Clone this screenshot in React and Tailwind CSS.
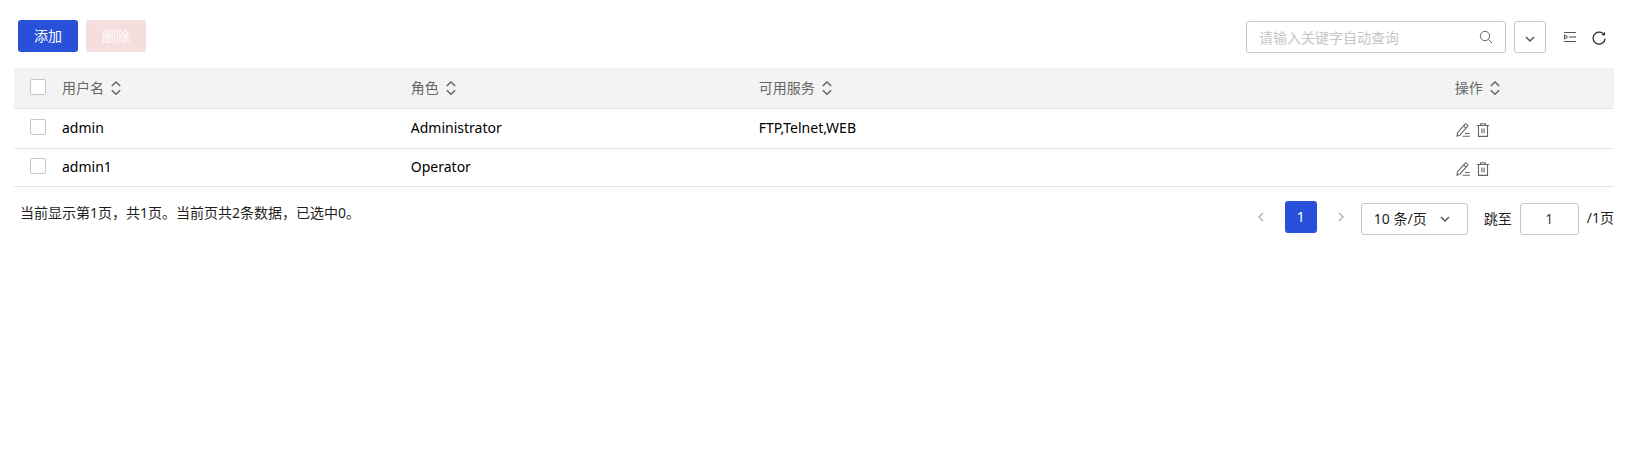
import React, { useState } from 'react';

const columns = ['用户名', '角色', '可用服务', '操作'];

const users = [
  { name: 'admin', role: 'Administrator', services: 'FTP,Telnet,WEB' },
  { name: 'admin1', role: 'Operator', services: '' },
];

function Chevron({ d, className }) {
  return (
    <svg viewBox="0 0 10 10" fill="none" stroke="currentColor" strokeWidth="1.5" className={className} aria-hidden="true">
      <path d={d} />
    </svg>
  );
}

function SortIcon() {
  return (
    <svg viewBox="0 0 10 14" fill="none" stroke="currentColor" strokeWidth="1.5" className="h-3.5 w-2.5" aria-hidden="true">
      <path d="M0.8 5 5 1l4.2 4M0.8 9.2 5 13.2l4.2-4" />
    </svg>
  );
}

function SearchIcon() {
  return (
    <svg viewBox="0 0 14 14" fill="none" stroke="currentColor" className="size-3.5" aria-hidden="true">
      <circle cx="6" cy="6" r="4.7" />
      <path d="m9.4 9.4 3.6 3.6" />
    </svg>
  );
}

function IndentIcon() {
  return (
    <svg viewBox="0 0 14 12" fill="none" stroke="currentColor" className="h-3 w-3.5" aria-hidden="true">
      <path d="M1 1.5h12M1 10.5h12" strokeWidth="1.1" />
      <path d="M6 6h7" strokeWidth="1.1" />
      <path d="M1.5 3.9 4.6 6 1.5 8.1z" strokeWidth="1" />
    </svg>
  );
}

function RefreshIcon() {
  return (
    <svg viewBox="0 0 16 16" fill="none" stroke="currentColor" className="size-4" aria-hidden="true">
      <path d="M11.9 3.4A6 6 0 1 0 14.1 8.6" strokeWidth="1.2" />
      <path d="m13.8 1.8.2 3.6-3.6-.4z" fill="currentColor" stroke="none" />
    </svg>
  );
}

function EditIcon() {
  return (
    <svg viewBox="0 0 14 14" fill="none" stroke="currentColor" strokeWidth="1.1" className="size-3.5" aria-hidden="true">
      <path d="M0.9 13.2 1.6 9.6 9.2 1.2q.6-.6 1.3 0l1 .9q.7.6.1 1.3L4 11.9z" strokeLinejoin="round" />
      <path d="m7.7 2.9 2.5 2.3M9 10.5h4.8M6.8 13.2h7" />
    </svg>
  );
}

function TrashIcon() {
  return (
    <svg viewBox="0 0 14 14" fill="none" stroke="currentColor" strokeWidth="1.1" className="size-3.5" aria-hidden="true">
      <path d="M0.8 2.5h12.4M4.6 2.5V.8h4.8v1.7M2.5 2.5v10.9h9V2.5M5.9 5.4v4.8M8.1 5.4v4.8" />
    </svg>
  );
}

function Checkbox({ label, checked, onChange }) {
  return (
    <input
      type="checkbox"
      aria-label={label}
      checked={checked}
      onChange={onChange}
      className="block size-4 appearance-none rounded-xs border border-[#c6c6c6] bg-white checked:border-[#2850d8] checked:bg-[#2850d8]"
    />
  );
}

export default function App() {
  const [selected, setSelected] = useState([]);
  const [page, setPage] = useState('1');
  const toggle = (name) =>
    setSelected((s) => (s.includes(name) ? s.filter((n) => n !== name) : [...s, name]));
  const all = selected.length === users.length;

  return (
    <main className="px-4 pt-5 pl-3.5 font-['Noto_Sans','Noto_Sans_CJK_SC',sans-serif] text-sm text-[#1f1f1f]">
      <div className="flex items-start justify-between pb-[15px] pl-1">
        <div className="flex gap-2">
          <button type="button" className="h-8 rounded-[3px] bg-[#2850d8] px-4 leading-5 text-white">添加</button>
          <button type="button" disabled={selected.length === 0} className="h-8 rounded-[3px] bg-[#d9363e] px-4 leading-5 text-white disabled:bg-[#f5dfde] disabled:text-[#fffaf9]">
            删除
          </button>
        </div>
        <div className="flex items-center gap-2 pt-px pr-[7px]">
          <label className="flex h-8 w-65 items-center rounded-[3px] border border-[#c6c6c6] pr-3 pl-3 text-[#666]">
            <input
              type="text"
              aria-label="关键字"
              placeholder="请输入关键字自动查询"
              className="min-w-0 flex-1 bg-transparent pt-0.5 outline-none placeholder:text-[#c6c6c6]"
            />
            <SearchIcon />
          </label>
          <button type="button" aria-label="展开筛选" className="flex size-8 items-center justify-center rounded-[3px] border border-[#c6c6c6] pt-1 text-[#555]">
            <Chevron d="M1 3l4 4 4-4" className="size-2.5" />
          </button>
          <button type="button" aria-label="列设置" className="ml-2 flex h-8 items-center px-px text-[#555]">
            <IndentIcon />
          </button>
          <button type="button" aria-label="刷新" className="ml-[5px] flex h-8 items-center pt-px text-[#222]">
            <RefreshIcon />
          </button>
        </div>
      </div>

      <table className="w-full table-fixed border-collapse text-left">
        <colgroup>
          <col className="w-10" />
          <col className="w-[21.8%]" />
          <col className="w-[21.75%]" />
          <col className="w-[43.5%]" />
          <col />
        </colgroup>
        <thead>
          <tr className="h-10 border-b border-[#e4e4e4] bg-[#f3f3f3] text-[#666]">
            <th className="p-0 pb-0.5 pl-4">
              <Checkbox
                label="全选"
                checked={all}
                onChange={() => setSelected(all ? [] : users.map((u) => u.name))}
              />
            </th>
            {columns.map((title) => (
              <th key={title} className="px-2 py-0 font-normal">
                <button type="button" className="flex items-center gap-[7px] leading-5">
                  {title}
                  <SortIcon />
                </button>
              </th>
            ))}
          </tr>
        </thead>
        <tbody className="text-black">
          {users.map((user) => (
            <tr key={user.name} className="h-[38px] border-b border-[#e4e4e4] first:h-10">
              <td className="p-0 pb-0.5 pl-4">
                <Checkbox label={user.name} checked={selected.includes(user.name)} onChange={() => toggle(user.name)} />
              </td>
              <td className="px-2 leading-5">{user.name}</td>
              <td className="px-2 leading-5">{user.role}</td>
              <td className="px-2 leading-5">{user.services}</td>
              <td className="px-2 pt-1 text-[#666]">
                <div className="flex gap-1.5 pl-px">
                  <button type="button" aria-label="编辑">
                    <EditIcon />
                  </button>
                  <button type="button" aria-label="删除用户">
                    <TrashIcon />
                  </button>
                </div>
              </td>
            </tr>
          ))}
        </tbody>
      </table>

      <div className="flex items-start justify-between pt-3.5 pl-1.5">
        <p className="pt-0.5 leading-5">当前显示第1页，共1页。当前页共2条数据，已选中{selected.length}。</p>
        <nav aria-label="分页" className="flex items-start">
          <button type="button" aria-label="上一页" disabled className="flex size-8 items-center justify-center text-[#b5b5b5]">
            <Chevron d="M7 1 3 5l4 4" className="size-2.5" />
          </button>
          <button type="button" aria-current="page" className="mx-2 size-8 rounded-[3px] bg-[#2850d8] text-white">1</button>
          <button type="button" aria-label="下一页" disabled className="flex size-8 items-center justify-center text-[#b5b5b5]">
            <Chevron d="M3 1l4 4-4 4" className="size-2.5" />
          </button>
          <div className="relative mt-0.5 ml-1">
            <select aria-label="每页条数" className="block h-8 w-[107px] appearance-none rounded-[3px] border border-[#c6c6c6] bg-white pl-3">
              <option>10 条/页</option>
              <option>20 条/页</option>
              <option>50 条/页</option>
            </select>
            <Chevron d="M1 3l4 4 4-4" className="pointer-events-none absolute top-[11px] right-[18px] size-2.5 text-[#555]" />
          </div>
          <label className="mt-0.5 ml-4 flex items-center gap-2">
            跳至
            <input
              type="text"
              value={page}
              onChange={(e) => setPage(e.target.value)}
              className="h-8 w-[59px] rounded-[3px] border border-[#c6c6c6] text-center text-[#444] outline-none"
            />
          </label>
          <span className="mt-[7px] ml-2 leading-5">/1页</span>
        </nav>
      </div>
    </main>
  );
}
